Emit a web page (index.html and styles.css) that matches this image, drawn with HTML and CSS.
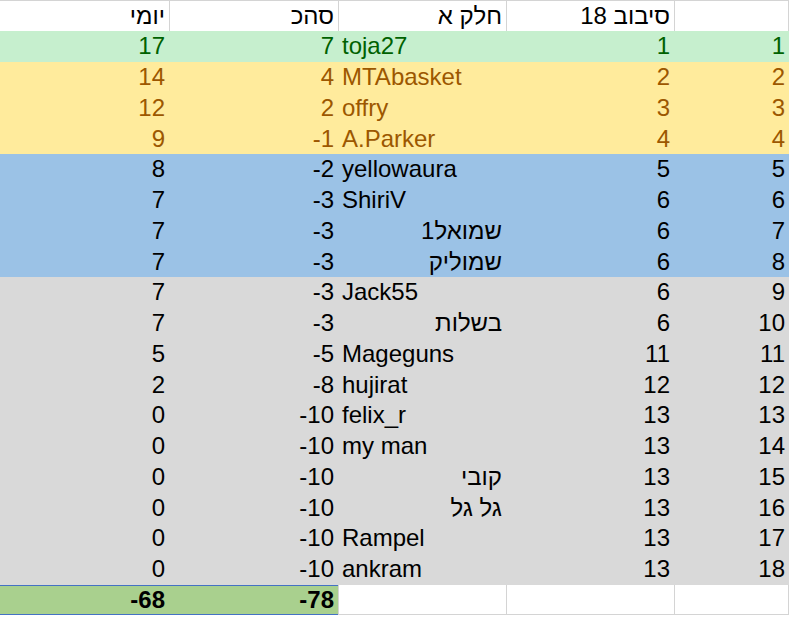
FILE: index.html
```html
<!DOCTYPE html>
<html lang="he">
<head>
<meta charset="utf-8">
<title>סיבוב 18</title>
<link rel="stylesheet" href="styles.css">
</head>
<body>
<div class="sheet">
  <div class="row head">
    <div class="c"></div>
    <div class="c heb">סיבוב 18</div>
    <div class="c heb">חלק א</div>
    <div class="c heb">סהכ</div>
    <div class="c heb">יומי</div>
  </div>
  <div class="row good">
    <div class="c num">1</div><div class="c num">1</div><div class="c lat">toja27</div><div class="c num">7</div><div class="c num">17</div>
  </div>
  <div class="row neutral">
    <div class="c num">2</div><div class="c num">2</div><div class="c lat">MTAbasket</div><div class="c num">4</div><div class="c num">14</div>
  </div>
  <div class="row neutral">
    <div class="c num">3</div><div class="c num">3</div><div class="c lat">offry</div><div class="c num">2</div><div class="c num">12</div>
  </div>
  <div class="row neutral">
    <div class="c num">4</div><div class="c num">4</div><div class="c lat">A.Parker</div><div class="c num">-1</div><div class="c num">9</div>
  </div>
  <div class="row blue">
    <div class="c num">5</div><div class="c num">5</div><div class="c lat">yellowaura</div><div class="c num">-2</div><div class="c num">8</div>
  </div>
  <div class="row blue">
    <div class="c num">6</div><div class="c num">6</div><div class="c lat">ShiriV</div><div class="c num">-3</div><div class="c num">7</div>
  </div>
  <div class="row blue">
    <div class="c num">7</div><div class="c num">6</div><div class="c heb">שמואל1</div><div class="c num">-3</div><div class="c num">7</div>
  </div>
  <div class="row blue">
    <div class="c num">8</div><div class="c num">6</div><div class="c heb">שמוליק</div><div class="c num">-3</div><div class="c num">7</div>
  </div>
  <div class="row grey">
    <div class="c num">9</div><div class="c num">6</div><div class="c lat">Jack55</div><div class="c num">-3</div><div class="c num">7</div>
  </div>
  <div class="row grey">
    <div class="c num">10</div><div class="c num">6</div><div class="c heb">בשלות</div><div class="c num">-3</div><div class="c num">7</div>
  </div>
  <div class="row grey">
    <div class="c num">11</div><div class="c num">11</div><div class="c lat">Mageguns</div><div class="c num">-5</div><div class="c num">5</div>
  </div>
  <div class="row grey">
    <div class="c num">12</div><div class="c num">12</div><div class="c lat">hujirat</div><div class="c num">-8</div><div class="c num">2</div>
  </div>
  <div class="row grey">
    <div class="c num">13</div><div class="c num">13</div><div class="c lat">felix_r</div><div class="c num">-10</div><div class="c num">0</div>
  </div>
  <div class="row grey">
    <div class="c num">14</div><div class="c num">13</div><div class="c lat">my man</div><div class="c num">-10</div><div class="c num">0</div>
  </div>
  <div class="row grey">
    <div class="c num">15</div><div class="c num">13</div><div class="c heb">קובי</div><div class="c num">-10</div><div class="c num">0</div>
  </div>
  <div class="row grey">
    <div class="c num">16</div><div class="c num">13</div><div class="c heb">גל גל</div><div class="c num">-10</div><div class="c num">0</div>
  </div>
  <div class="row grey">
    <div class="c num">17</div><div class="c num">13</div><div class="c lat">Rampel</div><div class="c num">-10</div><div class="c num">0</div>
  </div>
  <div class="row grey">
    <div class="c num">18</div><div class="c num">13</div><div class="c lat">ankram</div><div class="c num">-10</div><div class="c num">0</div>
  </div>
  <div class="row total">
    <div class="c blank"></div><div class="c blank"></div><div class="c blank"></div><div class="c num sum">-78</div><div class="c num sum">-68</div>
  </div>
</div>
</body>
</html>
```
FILE: styles.css
```css
html, body {
  margin: 0;
  padding: 0;
  background: #ffffff;
}

.sheet {
  display: grid;
  direction: rtl;
  grid-template-columns: 115px 168px 168px 169px 169px;
  grid-template-rows: 31px repeat(19, 30.75px);
  width: 789px;
  font-family: "Liberation Sans", Arial, sans-serif;
  font-size: 24px;
  color: #000000;
}

.row {
  display: contents;
}

.c {
  box-sizing: border-box;
  display: flex;
  align-items: center;
  padding: 0 4px;
  white-space: nowrap;
  overflow: hidden;
  line-height: 1;
}

.num {
  direction: ltr;
  justify-content: flex-end;
}

.lat {
  direction: ltr;
  justify-content: flex-start;
}

.heb {
  direction: rtl;
  justify-content: flex-start;
}

/* header row with gridlines */
.head > .c {
  background: #ffffff;
  border-top: 1px solid #d4d4d4;
  border-left: 1px solid #d4d4d4;
}
.head > .c:first-child {
  border-right: 1px solid #d4d4d4;
}
.head > .c:last-child {
  border-left: none;
}

.good > .c {
  background: #c6efce;
  color: #006100;
}

.neutral > .c {
  background: #ffeb9c;
  color: #9c5700;
}

.blue > .c {
  background: #9bc2e6;
}

.grey > .c {
  background: #d9d9d9;
}

/* totals row */
.total > .blank {
  background: #ffffff;
  border-left: 1px solid #d4d4d4;
  border-bottom: 1px solid #d4d4d4;
}
.total > .blank:first-child {
  border-right: 1px solid #d4d4d4;
}
.total > .sum {
  background: #a9d08e;
  font-weight: bold;
  border-top: 1px solid #4472c4;
  border-bottom: 1px solid #4472c4;
}
```
